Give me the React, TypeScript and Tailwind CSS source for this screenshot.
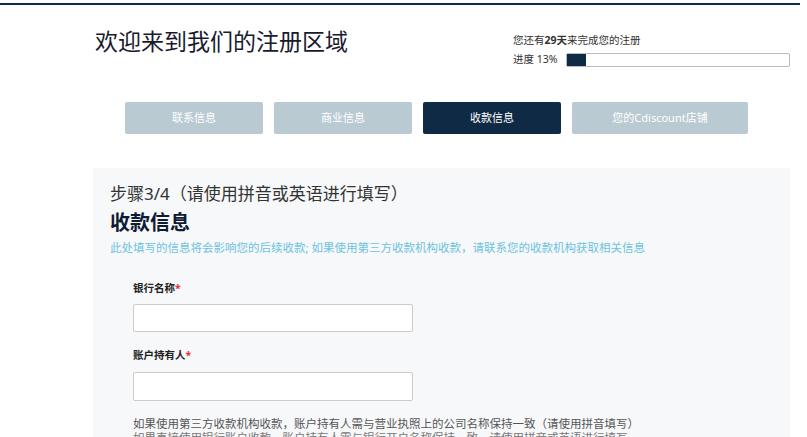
export default function App() {
  const tabs = [
    { t: "联系信息", w: "w-[138px]", a: false },
    { t: "商业信息", w: "w-[138px]", a: false },
    { t: "收款信息", w: "w-[138px]", a: true },
    { t: "您的Cdiscount店铺", w: "w-[176px]", a: false },
  ];
  return (
    <div className="w-[807px] h-[437px] overflow-hidden bg-white text-[#333]" style={{ fontFamily: '"Noto Sans", "Noto Sans CJK SC", sans-serif' }}>
      <div className="h-[2px] mt-[3px] w-[800px] bg-[#0f2a44]" />
      <div className="flex justify-between pl-[95px] pr-[17px] pt-[21px] h-[97px]">
        <div className="text-[23px] leading-[30px] text-[#1a1a2e]">欢迎来到我们的注册区域</div>
        <div className="w-[277px] pt-[7px]">
          <div className="text-[10.5px] leading-[14px] text-[#333]">您还有<b>29天</b>来完成您的注册</div>
          <div className="flex items-center mt-[5px] gap-[5px]">
            <span className="text-[10.5px] text-[#333] w-[48px]">进度 13%</span>
            <div className="flex-1 h-[14px] border border-[#bbb] rounded-[2px] bg-white">
              <div className="h-full w-[19px] bg-[#0f2a44]" />
            </div>
          </div>
        </div>
      </div>
      <div className="flex gap-[11px] pl-[125px]">
        {tabs.map((x) => (
          <div key={x.t} className={`${x.w} h-[32px] flex items-center justify-center text-[11px] rounded-[2px] ${x.a ? "bg-[#0f2a44] text-white" : "bg-[#b9cad3] text-white"}`}>{x.t}</div>
        ))}
      </div>
      <div className="ml-[93px] mt-[34px] w-[697px] h-[300px] bg-[#f7f8fa] pl-[17px] pt-[14px]">
        <div className="text-[17px] leading-[24px] text-[#333]">步骤3/4（请使用拼音或英语进行填写）</div>
        <div className="text-[20px] leading-[28px] mt-[3px] font-bold text-[#0f1a33]">收款信息</div>
        <div className="text-[11.5px] leading-[14px] mt-[4px] text-[#6cc3e0]">此处填写的信息将会影响您的后续收款; 如果使用第三方收款机构收款，请联系您的收款机构获取相关信息</div>
        <div className="pl-[23px] pt-[26px]">
          <div className="text-[10.5px] font-bold text-[#222] leading-[14px]">银行名称<span className="text-[#e03030]">*</span></div>
          <div className="mt-[9px] w-[280px] h-[28px] bg-white border border-[#ccc] rounded-[2px]" />
          <div className="mt-[16px] text-[10.5px] font-bold text-[#222] leading-[14px]">账户持有人<span className="text-[#e03030]">*</span></div>
          <div className="mt-[10px] w-[280px] h-[29px] bg-white border border-[#ccc] rounded-[2px]" />
          <div className="mt-[16px] text-[11.5px] leading-[14px] text-[#555]">如果使用第三方收款机构收款，账户持有人需与营业执照上的公司名称保持一致（请使用拼音填写）</div>
          <div className="text-[11.5px] leading-[14px] text-[#777]">如果直接使用银行账户收款，账户持有人需与银行开户名称保持一致，请使用拼音或英语进行填写</div>
        </div>
      </div>
    </div>
  );
}
